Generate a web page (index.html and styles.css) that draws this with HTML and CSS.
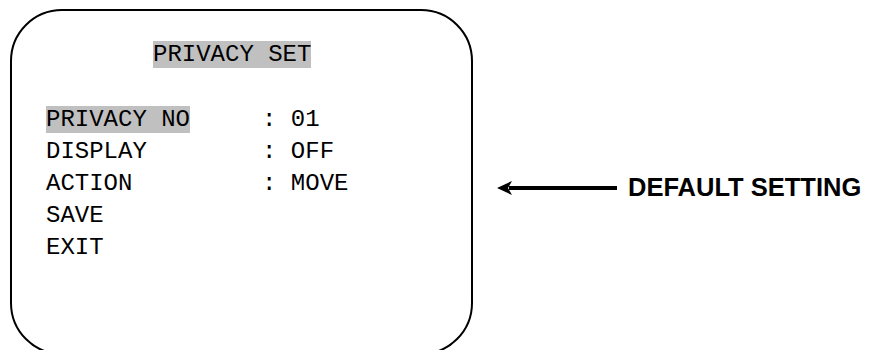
FILE: index.html
```html
<!DOCTYPE html>
<html lang="en">
<head>
    <meta charset="UTF-8">
    <meta name="viewport" content="width=device-width, initial-scale=1.0">
    <title>Privacy Set</title>
    <link rel="stylesheet" href="styles.css">
</head>
<body>
    <div class="page">
        <!-- on screen menu -->
        <div class="osd">
            <div class="osd-title"><span class="hl">PRIVACY SET</span></div>
            <div class="osd-menu">
                <div class="item"><span class="hl">PRIVACY NO</span></div>
                <div class="value">: 01</div>
                <div class="item">DISPLAY</div>
                <div class="value">: OFF</div>
                <div class="item">ACTION</div>
                <div class="value">: MOVE</div>
                <div class="item">SAVE</div>
                <div class="value"></div>
                <div class="item">EXIT</div>
                <div class="value"></div>
            </div>
        </div>

        <div class="callout">
            <svg class="arrow" width="120" height="20" viewBox="0 0 120 20">
                <line x1="12" y1="10" x2="120" y2="10" stroke="#000" stroke-width="4"/>
                <polygon points="0,10 15,3 11,10 15,17" fill="#000"/>
            </svg>
            <span class="callout-text">DEFAULT SETTING</span>
        </div>
    </div>
</body>
</html>
```

FILE: styles.css
```css
body {
    margin: 0;
    padding: 0;
    background: #fff;
    color: #000;
    overflow: hidden;
}

.page {
    display: flex;
    align-items: flex-start;
    padding: 9px 0 0 10px;
    height: 350px;
    box-sizing: border-box;
}

.osd {
    width: 463px;
    height: 346px;
    flex-shrink: 0;
    box-sizing: border-box;
    border: 2px solid #000;
    border-radius: 52px;
    padding: 30px 0 0 34px;
    font-family: "Courier New", "Nimbus Mono PS", FreeMono, "Liberation Mono", monospace;
    font-size: 24px;
}

.osd-title {
    padding-left: 107px;
    line-height: normal;
}

.hl {
    background-color: #c0c0c0;
}

.osd-menu {
    display: grid;
    grid-template-columns: 15ch auto;
    line-height: 32px;
    margin-top: 36px;
}

.callout {
    display: flex;
    align-items: center;
    gap: 11px;
    margin-top: 164px;
    margin-left: 24px;
}

.arrow {
    display: block;
}

.callout-text {
    font-family: "Liberation Sans", Arial, sans-serif;
    font-weight: bold;
    font-size: 25.5px;
    white-space: nowrap;
}
```
